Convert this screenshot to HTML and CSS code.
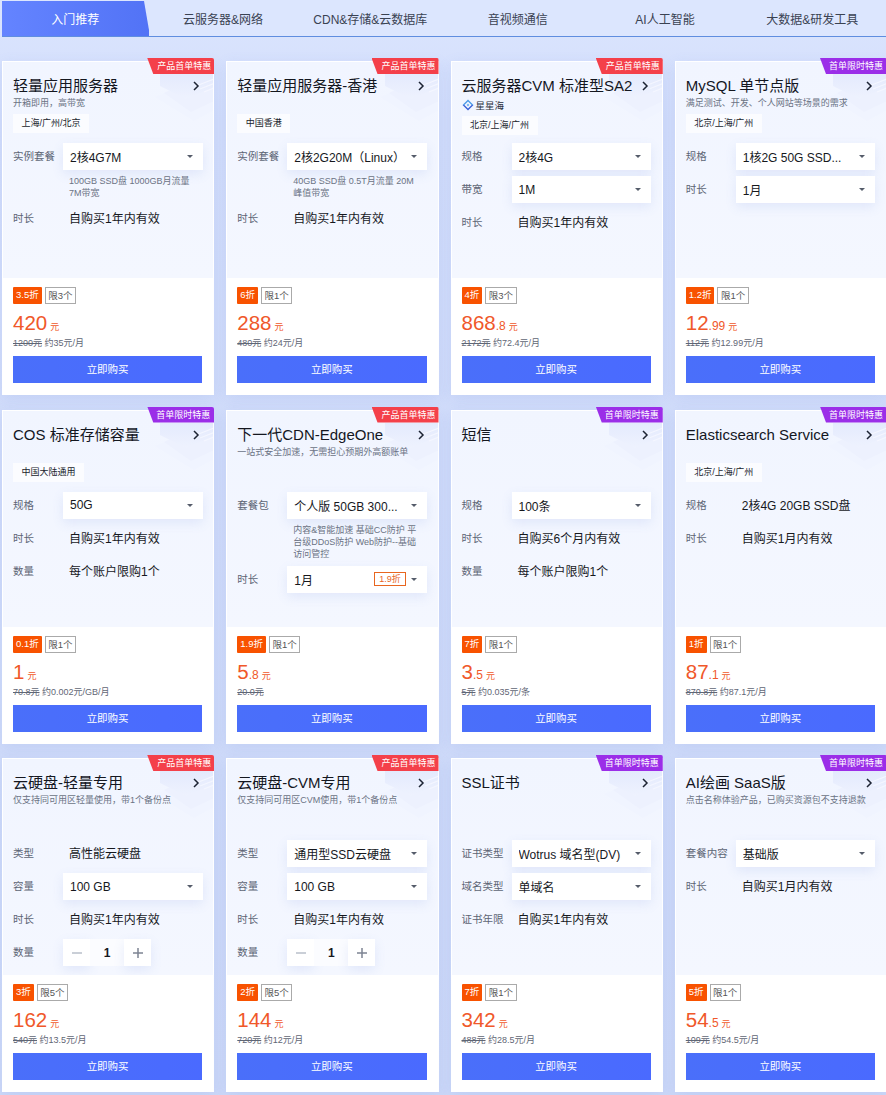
FILE: index.html
```html
<!DOCTYPE html>
<html lang="zh-CN">
<head>
<meta charset="utf-8">
<title>入门推荐</title>
<link rel="stylesheet" href="styles.css">
</head>
<body>
<svg class="defs" width="0" height="0" aria-hidden="true">
  <defs>
    <linearGradient id="layer" x1="0" y1="0" x2="0" y2="1"><stop offset="0" stop-color="#e4eafd"/><stop offset="1" stop-color="#eef2fe"/></linearGradient>
    <symbol id="deco" viewBox="0 0 60 55">
      <path d="M1 25 L38 10 L60 20 L60 38 L40 49 Z" fill="#f0f4ff"/>
      <path d="M10 21 L38 8 L60 16 L60 29 L37 40 Z" fill="#edf1fe"/>
      <path d="M6 2 H60 V15 L32 27 L6 14 Z" fill="url(#layer)"/>
      <path d="M42 14 L60 7 M46 17 L60 11.500 M50 20 L60 16" stroke="#f4f6ff" stroke-width="1.100" fill="none"/>
    </symbol>
    <symbol id="chev" viewBox="0 0 8 10"><path d="M2 1 L6 5 L2 9" fill="none" stroke="#1c2333" stroke-width="1.500"/></symbol>
    <symbol id="minus" viewBox="0 0 10 10"><path d="M0 5 H10" stroke="#b9bfca" stroke-width="1.500"/></symbol>
    <symbol id="plus" viewBox="0 0 10 10"><path d="M0 5 H10 M5 0 V10" stroke="#7d8493" stroke-width="1.500"/></symbol>
  </defs>
</svg>
<nav class="tabs">
  <a class="tab active">入门推荐</a>
  <a class="tab">云服务器&amp;网络</a>
  <a class="tab">CDN&amp;存储&amp;云数据库</a>
  <a class="tab">音视频通信</a>
  <a class="tab">AI人工智能</a>
  <a class="tab">大数据&amp;研发工具</a>
</nav>
<main class="grid">

  <article class="card">
    <span class="ribbon red">产品首单特惠</span>
    <div class="top">
      <svg class="deco"><use href="#deco"/></svg>
      <header class="head">
        <h3 class="title">轻量应用服务器<svg class="chev"><use href="#chev"/></svg></h3>
        <p class="sub">开箱即用&#xFF0C;高带宽</p>
        <span class="tag">上海/广州/北京</span>
      </header>
      <div class="row"><span class="lab">实例套餐</span><div class="sel"><span class="val">2核4G7M</span><i class="caret"></i></div></div>
      <p class="note">100GB SSD盘 1000GB月流量 7M带宽</p>
      <div class="row"><span class="lab">时长</span><span class="text">自购买1年内有效</span></div>
    </div>
    <div class="bottom">
      <div class="badges"><span class="off">3.5折</span><span class="lim">限3个</span></div>
      <div class="price"><b>420</b><em>元</em></div>
      <div class="old"><s>1200元</s> 约35元/月</div>
      <a class="buy">立即购买</a>
    </div>
  </article>

  <article class="card">
    <span class="ribbon red">产品首单特惠</span>
    <div class="top">
      <svg class="deco"><use href="#deco"/></svg>
      <header class="head">
        <h3 class="title">轻量应用服务器-香港<svg class="chev"><use href="#chev"/></svg></h3>
        <p class="sub"></p>
        <span class="tag">中国香港</span>
      </header>
      <div class="row"><span class="lab">实例套餐</span><div class="sel"><span class="val">2核2G20M&#xFF08;Linux&#xFF09;</span><i class="caret"></i></div></div>
      <p class="note">40GB SSD盘 0.5T月流量 20M 峰值带宽</p>
      <div class="row"><span class="lab">时长</span><span class="text">自购买1年内有效</span></div>
    </div>
    <div class="bottom">
      <div class="badges"><span class="off">6折</span><span class="lim">限1个</span></div>
      <div class="price"><b>288</b><em>元</em></div>
      <div class="old"><s>480元</s> 约24元/月</div>
      <a class="buy">立即购买</a>
    </div>
  </article>

  <article class="card">
    <span class="ribbon red">产品首单特惠</span>
    <div class="top">
      <svg class="deco"><use href="#deco"/></svg>
      <header class="head">
        <h3 class="title">云服务器CVM 标准型SA2<svg class="chev"><use href="#chev"/></svg></h3>
        <p class="brand"><svg class="logo" viewBox="0 0 12 12"><path d="M6 0.500 L11.500 6 L9.600 6 L6 2.400 L2.400 6 L0.500 6Z" fill="#4a9be8"/><path d="M0.500 6 L6 11.500 L11.500 6 L9.600 6 L6 9.600 L2.400 6Z" fill="#3a62d8"/><path d="M6 4.600 L7.400 6 L6 7.400 L4.600 6Z" fill="#6fb2f0"/></svg>星星海</p>
        <span class="tag">北京/上海/广州</span>
      </header>
      <div class="row"><span class="lab">规格</span><div class="sel"><span class="val">2核4G</span><i class="caret"></i></div></div>
      <div class="row"><span class="lab">带宽</span><div class="sel"><span class="val">1M</span><i class="caret"></i></div></div>
      <div class="row"><span class="lab">时长</span><span class="text">自购买1年内有效</span></div>
    </div>
    <div class="bottom">
      <div class="badges"><span class="off">4折</span><span class="lim">限3个</span></div>
      <div class="price"><b>868</b><small>.8</small><em>元</em></div>
      <div class="old"><s>2172元</s> 约72.4元/月</div>
      <a class="buy">立即购买</a>
    </div>
  </article>

  <article class="card">
    <span class="ribbon purple">首单限时特惠</span>
    <div class="top">
      <svg class="deco"><use href="#deco"/></svg>
      <header class="head">
        <h3 class="title">MySQL 单节点版<svg class="chev"><use href="#chev"/></svg></h3>
        <p class="sub">满足测试、开发、个人网站等场景的需求</p>
        <span class="tag">北京/上海/广州</span>
      </header>
      <div class="row"><span class="lab">规格</span><div class="sel"><span class="val">1核2G 50G SSD...</span><i class="caret"></i></div></div>
      <div class="row"><span class="lab">时长</span><div class="sel"><span class="val">1月</span><i class="caret"></i></div></div>
    </div>
    <div class="bottom">
      <div class="badges"><span class="off">1.2折</span><span class="lim">限1个</span></div>
      <div class="price"><b>12</b><small>.99</small><em>元</em></div>
      <div class="old"><s>112元</s> 约12.99元/月</div>
      <a class="buy">立即购买</a>
    </div>
  </article>

  <article class="card">
    <span class="ribbon purple">首单限时特惠</span>
    <div class="top">
      <svg class="deco"><use href="#deco"/></svg>
      <header class="head">
        <h3 class="title">COS 标准存储容量<svg class="chev"><use href="#chev"/></svg></h3>
        <p class="sub"></p>
        <span class="tag">中国大陆通用</span>
      </header>
      <div class="row"><span class="lab">规格</span><div class="sel"><span class="val">50G</span><i class="caret"></i></div></div>
      <div class="row"><span class="lab">时长</span><span class="text">自购买1年内有效</span></div>
      <div class="row"><span class="lab">数量</span><span class="text">每个账户限购1个</span></div>
    </div>
    <div class="bottom">
      <div class="badges"><span class="off">0.1折</span><span class="lim">限1个</span></div>
      <div class="price"><b>1</b><em>元</em></div>
      <div class="old"><s>70.8元</s> 约0.002元/GB/月</div>
      <a class="buy">立即购买</a>
    </div>
  </article>

  <article class="card">
    <span class="ribbon red">产品首单特惠</span>
    <div class="top">
      <svg class="deco"><use href="#deco"/></svg>
      <header class="head">
        <h3 class="title">下一代CDN-EdgeOne<svg class="chev"><use href="#chev"/></svg></h3>
        <p class="sub">一站式安全加速&#xFF0C;无需担心预期外高额账单</p>
      </header>
      <div class="row"><span class="lab">套餐包</span><div class="sel"><span class="val">个人版 50GB 300...</span><i class="caret"></i></div></div>
      <p class="note">内容&amp;智能加速 基础CC防护 平台级DDoS防护 Web防护--基础访问管控</p>
      <div class="row"><span class="lab">时长</span><div class="sel"><span class="val">1月</span><span class="mini">1.9折</span><i class="caret"></i></div></div>
    </div>
    <div class="bottom">
      <div class="badges"><span class="off">1.9折</span><span class="lim">限1个</span></div>
      <div class="price"><b>5</b><small>.8</small><em>元</em></div>
      <div class="old"><s>20.0元</s></div>
      <a class="buy">立即购买</a>
    </div>
  </article>

  <article class="card">
    <span class="ribbon purple">首单限时特惠</span>
    <div class="top">
      <svg class="deco"><use href="#deco"/></svg>
      <header class="head">
        <h3 class="title">短信<svg class="chev"><use href="#chev"/></svg></h3>
      </header>
      <div class="row"><span class="lab">规格</span><div class="sel"><span class="val">100条</span><i class="caret"></i></div></div>
      <div class="row"><span class="lab">时长</span><span class="text">自购买6个月内有效</span></div>
      <div class="row"><span class="lab">数量</span><span class="text">每个账户限购1个</span></div>
    </div>
    <div class="bottom">
      <div class="badges"><span class="off">7折</span><span class="lim">限1个</span></div>
      <div class="price"><b>3</b><small>.5</small><em>元</em></div>
      <div class="old"><s>5元</s> 约0.035元/条</div>
      <a class="buy">立即购买</a>
    </div>
  </article>

  <article class="card">
    <span class="ribbon purple">首单限时特惠</span>
    <div class="top">
      <svg class="deco"><use href="#deco"/></svg>
      <header class="head">
        <h3 class="title">Elasticsearch Service<svg class="chev"><use href="#chev"/></svg></h3>
        <p class="sub"></p>
        <span class="tag">北京/上海/广州</span>
      </header>
      <div class="row"><span class="lab">规格</span><span class="text">2核4G 20GB SSD盘</span></div>
      <div class="row"><span class="lab">时长</span><span class="text">自购买1月内有效</span></div>
    </div>
    <div class="bottom">
      <div class="badges"><span class="off">1折</span><span class="lim">限1个</span></div>
      <div class="price"><b>87</b><small>.1</small><em>元</em></div>
      <div class="old"><s>870.8元</s> 约87.1元/月</div>
      <a class="buy">立即购买</a>
    </div>
  </article>

  <article class="card">
    <span class="ribbon red">产品首单特惠</span>
    <div class="top">
      <svg class="deco"><use href="#deco"/></svg>
      <header class="head">
        <h3 class="title">云硬盘-轻量专用<svg class="chev"><use href="#chev"/></svg></h3>
        <p class="sub">仅支持同可用区轻量使用&#xFF0C;带1个备份点</p>
      </header>
      <div class="row"><span class="lab">类型</span><span class="text">高性能云硬盘</span></div>
      <div class="row"><span class="lab">容量</span><div class="sel"><span class="val">100 GB</span><i class="caret"></i></div></div>
      <div class="row"><span class="lab">时长</span><span class="text">自购买1年内有效</span></div>
      <div class="row"><span class="lab">数量</span><div class="stepper"><span class="step"><svg class="ico"><use href="#minus"/></svg></span><span class="num">1</span><span class="step"><svg class="ico"><use href="#plus"/></svg></span></div></div>
    </div>
    <div class="bottom">
      <div class="badges"><span class="off">3折</span><span class="lim">限5个</span></div>
      <div class="price"><b>162</b><em>元</em></div>
      <div class="old"><s>540元</s> 约13.5元/月</div>
      <a class="buy">立即购买</a>
    </div>
  </article>

  <article class="card">
    <span class="ribbon red">产品首单特惠</span>
    <div class="top">
      <svg class="deco"><use href="#deco"/></svg>
      <header class="head">
        <h3 class="title">云硬盘-CVM专用<svg class="chev"><use href="#chev"/></svg></h3>
        <p class="sub">仅支持同可用区CVM使用&#xFF0C;带1个备份点</p>
      </header>
      <div class="row"><span class="lab">类型</span><div class="sel"><span class="val">通用型SSD云硬盘</span><i class="caret"></i></div></div>
      <div class="row"><span class="lab">容量</span><div class="sel"><span class="val">100 GB</span><i class="caret"></i></div></div>
      <div class="row"><span class="lab">时长</span><span class="text">自购买1年内有效</span></div>
      <div class="row"><span class="lab">数量</span><div class="stepper"><span class="step"><svg class="ico"><use href="#minus"/></svg></span><span class="num">1</span><span class="step"><svg class="ico"><use href="#plus"/></svg></span></div></div>
    </div>
    <div class="bottom">
      <div class="badges"><span class="off">2折</span><span class="lim">限5个</span></div>
      <div class="price"><b>144</b><em>元</em></div>
      <div class="old"><s>720元</s> 约12元/月</div>
      <a class="buy">立即购买</a>
    </div>
  </article>

  <article class="card">
    <span class="ribbon purple">首单限时特惠</span>
    <div class="top">
      <svg class="deco"><use href="#deco"/></svg>
      <header class="head">
        <h3 class="title">SSL证书<svg class="chev"><use href="#chev"/></svg></h3>
      </header>
      <div class="row"><span class="lab">证书类型</span><div class="sel"><span class="val">Wotrus 域名型(DV)</span><i class="caret"></i></div></div>
      <div class="row"><span class="lab">域名类型</span><div class="sel"><span class="val">单域名</span><i class="caret"></i></div></div>
      <div class="row"><span class="lab">证书年限</span><span class="text">自购买1年内有效</span></div>
    </div>
    <div class="bottom">
      <div class="badges"><span class="off">7折</span><span class="lim">限1个</span></div>
      <div class="price"><b>342</b><em>元</em></div>
      <div class="old"><s>488元</s> 约28.5元/月</div>
      <a class="buy">立即购买</a>
    </div>
  </article>

  <article class="card">
    <span class="ribbon purple">首单限时特惠</span>
    <div class="top">
      <svg class="deco"><use href="#deco"/></svg>
      <header class="head">
        <h3 class="title">AI绘画 SaaS版<svg class="chev"><use href="#chev"/></svg></h3>
        <p class="sub">点击名称体验产品&#xFF0C;已购买资源包不支持退款</p>
      </header>
      <div class="row"><span class="lab">套餐内容</span><div class="sel"><span class="val">基础版</span><i class="caret"></i></div></div>
      <div class="row"><span class="lab">时长</span><span class="text">自购买1月内有效</span></div>
    </div>
    <div class="bottom">
      <div class="badges"><span class="off">5折</span><span class="lim">限1个</span></div>
      <div class="price"><b>54</b><small>.5</small><em>元</em></div>
      <div class="old"><s>109元</s> 约54.5元/月</div>
      <a class="buy">立即购买</a>
    </div>
  </article>

</main>
</body>
</html>
```

FILE: styles.css
```css
* { box-sizing: border-box; }
html, body { margin: 0; padding: 0; }
body {
  width: 886px;
  height: 1095px;
  overflow: hidden;
  padding-left: 2px;
  background: linear-gradient(180deg, #dbe5fe 0, #d3defb 120px, #cdd9f8 100%);
  font-family: "Liberation Sans", "Noto Sans CJK SC", sans-serif;
  color: #16181d;
}
.defs { position: absolute; }
.tabs {
  display: grid;
  grid-template-columns: repeat(6, 1fr);
  height: 37px;
  padding-top: 1px;
  border-bottom: 1px solid #5f8ee0;
  background: #dce6fe;
}
.tab {
  display: flex;
  align-items: center;
  justify-content: center;
  font-size: 12px;
  color: #3a4252;
}
.tab.active {
  color: #fff;
  background: linear-gradient(90deg, #6484ff, #5273f6);
  clip-path: polygon(0 0, 142px 0, 148px 100%, 0 100%);
  padding-right: 1px;
}
.grid {
  display: grid;
  grid-template-columns: repeat(4, 212.25px);
  grid-auto-rows: 334px;
  gap: 14.5px 12px;
  margin-top: 24px;
}
.card {
  position: relative;
  display: flex;
  flex-direction: column;
  background: #fff;
  box-shadow: 0 4px 14px rgba(90, 120, 210, .12);
}
.top {
  position: relative;
  height: 217px;
  padding: 14px 11px 0;
  overflow: hidden;
  border: 1px solid #fff;
  border-bottom: 0;
  background: linear-gradient(180deg, #f1f5ff, #f4f7ff);
}
.top > * { position: relative; }
.top > .deco {
  position: absolute;
  top: 10px;
  right: -1px;
  width: 60px;
  height: 55px;
}
.ribbon {
  position: absolute;
  z-index: 2;
  top: -3px;
  right: 0;
  width: 67px;
  height: 16px;
  padding-left: 10px;
  font-size: 9px;
  line-height: 16px;
  color: #fff;
  white-space: nowrap;
  clip-path: polygon(0 0, 100% 0, 100% 100%, 6px 100%);
  border-radius: 0 2px 0 0;
}
.ribbon.red { background: #f4404a; }
.ribbon.purple { background: #9b2ee8; padding-left: 9px; }
.head {
  display: flex;
  flex-direction: column;
  align-items: flex-start;
  height: 68px;
  margin: -1px -1px 0;
}
.title {
  position: relative;
  width: 100%;
  margin: 0;
  font-size: 15px;
  font-weight: 400;
  line-height: 22px;
  white-space: nowrap;
  color: #14171f;
}
.chev {
  position: absolute;
  top: 6px;
  right: 3px;
  width: 8px;
  height: 10px;
}
.sub {
  height: 12px;
  margin: 0;
  font-size: 9px;
  line-height: 12px;
  color: #6b7384;
  white-space: nowrap;
}
.brand {
  display: flex;
  align-items: center;
  gap: 2px;
  height: 15px;
  margin: 0 0 3px;
  font-size: 9.5px;
  color: #2a3040;
}
.logo { width: 12px; height: 12px; }
.tag {
  height: 19px;
  margin-top: 5px;
  padding: 0 8.5px;
  font-size: 9px;
  line-height: 19px;
  background: #fbfcff;
  color: #20242c;
}
.brand + .tag { margin-top: 1px; }
.row {
  display: flex;
  align-items: center;
  height: 27px;
  margin: 0 -1px 6px;
}
.lab {
  flex: 0 0 50px;
  padding-bottom: 2px;
  font-size: 10.5px;
  color: #5d6575;
  white-space: nowrap;
}
.text {
  margin-left: 6px;
  padding-bottom: 2px;
  font-size: 12px;
  white-space: nowrap;
  color: #16181d;
}
.sel {
  display: flex;
  align-items: center;
  width: 139.5px;
  height: 27px;
  padding: 0 10px 0 7px;
  background: #fff;
  box-shadow: 0 4px 12px rgba(90, 120, 210, .12);
}
.val {
  flex: 1;
  font-size: 12px;
  white-space: nowrap;
  overflow: hidden;
}
.caret {
  width: 0;
  height: 0;
  border: 3px solid transparent;
  border-top: 3.5px solid #555c6a;
  border-bottom: 0;
}
.mini {
  height: 14px;
  margin-right: 5px;
  padding: 0 4px;
  border: 1px solid #e8661f;
  font-size: 9px;
  line-height: 12px;
  color: #e8661f;
}
.note {
  width: 127px;
  margin: -1px 0 6px 55px;
  font-size: 9px;
  line-height: 12px;
  color: #6b7384;
}
.stepper { display: flex; }
.step, .num {
  display: flex;
  align-items: center;
  justify-content: center;
  height: 27px;
}
.step {
  width: 27px;
  background: #fff;
  box-shadow: 0 4px 12px rgba(90, 120, 210, .12);
}
.ico { width: 10px; height: 10px; }
.num {
  width: 34px;
  font-size: 12px;
  font-weight: 700;
  background: #fbfcff;
}
.bottom {
  flex: 1;
  padding: 9px 12px 0 11px;
}
.badges { display: flex; gap: 3px; height: 17px; }
.off {
  padding: 0 3px;
  font-size: 9.5px;
  line-height: 16px;
  color: #fff;
  background: #f85200;
  border-radius: 1px;
}
.lim {
  padding: 0 2.5px;
  border: 1px solid #aaa;
  font-size: 9.5px;
  line-height: 15px;
  color: #555;
}
.price {
  height: 24px;
  margin-top: 7px;
  line-height: 24px;
  color: #f0582a;
  white-space: nowrap;
}
.price b { font-size: 20.5px; font-weight: 400; }
.price small { font-size: 12px; }
.price em { margin-left: 3px; font-size: 9px; font-style: normal; }
.old {
  height: 12px;
  margin-top: 2px;
  font-size: 9px;
  line-height: 12px;
  color: #5f6675;
}
.buy {
  display: block;
  height: 27px;
  margin-top: 7px;
  font-size: 10.5px;
  line-height: 27px;
  text-align: center;
  color: #fff;
  background: linear-gradient(90deg, #4a6ffa, #4a6aff);
}
```
